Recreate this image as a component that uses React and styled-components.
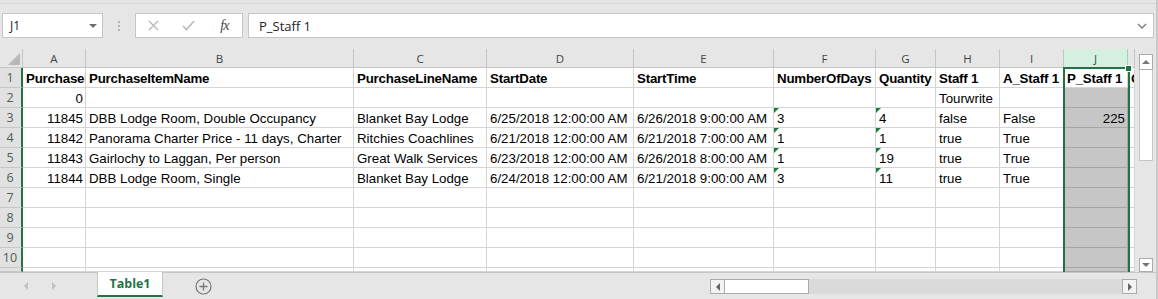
import React from 'react';
import styled, { createGlobalStyle, css } from 'styled-components';

const GREEN = '#217346';
const GRID = '#d4d4d4';

const GlobalStyle = createGlobalStyle`
  html, body { margin: 0; padding: 0; background: #e6e6e6; }
  body { width: 1158px; height: 299px; overflow: hidden; font-family: "Liberation Sans", Arial, sans-serif; }
  #root { width: 1158px; height: 299px; }
`;

const Window = styled.div`
  width: 1158px;
  height: 299px;
  box-sizing: border-box;
  display: flex;
  flex-direction: column;
  background: #e6e6e6;
  border-right: 2px solid #c9c9c9;
  overflow: hidden;
`;

/* ---------- formula bar ---------- */
const FormulaBar = styled.div`
  height: 46px;
  margin-top: 3px;
  box-sizing: border-box;
  border-top: 1px solid #d6d6d6;
  display: flex;
  align-items: flex-start;
  padding: 9px 2px 0 2px;
  font-family: "Open Sans", "Noto Sans", sans-serif;
`;

const NameBox = styled.div`
  width: 101px;
  height: 25px;
  box-sizing: border-box;
  border: 1px solid #c6c6c6;
  background: #fff;
  display: flex;
  align-items: center;
  justify-content: space-between;
  padding: 0 5px 0 7px;
  font-size: 12px;
  color: #222;
`;

const DropTriangle = styled.span`
  width: 0;
  height: 0;
  border-left: 4px solid transparent;
  border-right: 4px solid transparent;
  border-top: 4px solid #6f6f6f;
`;

const Splitter = styled.div`
  width: 32px;
  height: 25px;
  display: flex;
  flex-direction: column;
  align-items: center;
  justify-content: center;
  gap: 2px;
  & > span { width: 2px; height: 2px; background: #b4b4b4; }
`;

const FxGroup = styled.div`
  width: 108px;
  height: 25px;
  box-sizing: border-box;
  border: 1px solid #c6c6c6;
  background: #fff;
  display: grid;
  grid-template-columns: repeat(3, 1fr);
  align-items: center;
  justify-items: center;
`;

const FxLabel = styled.span`
  font-family: "Liberation Serif", "Times New Roman", serif;
  font-style: italic;
  font-size: 14px;
  color: #444;
  letter-spacing: -1px;
`;

const FormulaInput = styled.div`
  flex: 1;
  margin-left: 5px;
  height: 25px;
  box-sizing: border-box;
  border: 1px solid #c6c6c6;
  background: #fff;
  display: flex;
  align-items: center;
  justify-content: space-between;
  padding: 0 6px 0 10px;
  font-size: 13px;
  color: #222;
`;

/* ---------- sheet ---------- */
const Main = styled.div`
  height: 223px;
  display: flex;
`;

const Sheet = styled.div`
  position: relative;
  width: 1135px;
  height: 223px;
  overflow: hidden;
  display: grid;
  grid-template-columns: 23px 63px 268px 133px 147px 140px 102px 60px 64px 64px 64px 7px;
  grid-template-rows: 19px repeat(10, 20px) 4px;
  background: #fff;
`;

const Corner = styled.div`
  background: #e6e6e6;
  border-bottom: 1px solid #c6c6c6;
  border-right: 1px solid #c6c6c6;
  box-sizing: border-box;
  display: flex;
  align-items: flex-end;
  justify-content: flex-end;
  padding: 0 2px 2px 0;
`;

const ColHeader = styled.div`
  box-sizing: border-box;
  background: ${p => (p.$selected ? '#d3f0e0' : '#e6e6e6')};
  border-right: 1px solid ${p => (p.$selected ? '#9fd5b7' : '#c6c6c6')};
  border-bottom: 1px solid ${p => (p.$selected ? GREEN : '#c6c6c6')};
  display: flex;
  align-items: center;
  justify-content: center;
  font-family: "Open Sans", "Noto Sans", sans-serif;
  font-size: 11.5px;
  color: ${p => (p.$selected ? '#1e5c38' : '#444')};
  padding-top: 1px;
`;

const RowHeader = styled.div`
  box-sizing: border-box;
  background: #e1e1e1;
  border-right: 2px solid ${GREEN};
  border-bottom: 1px solid #c6c6c6;
  display: flex;
  align-items: center;
  justify-content: center;
  font-family: "Open Sans", "Noto Sans", sans-serif;
  font-size: 12.5px;
  color: #4f5d55;
  padding-right: 1px;
`;

const Cell = styled.div`
  position: relative;
  box-sizing: border-box;
  border-right: 1px solid ${p => (p.$sel ? '#a6a6a6' : GRID)};
  border-bottom: 1px solid ${p => (p.$sel ? '#a6a6a6' : GRID)};
  background: ${p => (p.$sel ? '#c6c6c6' : '#fff')};
  padding: 3px 2px 0 3px;
  line-height: 16px;
  font-size: 13.3px;
  color: #000;
  white-space: nowrap;
  overflow: hidden;
  text-align: ${p => (p.$right ? 'right' : 'left')};
  ${p => p.$bold && css`font-weight: bold; letter-spacing: -0.2px;`}
  ${p =>
    p.$flag &&
    css`
      &::before {
        content: '';
        position: absolute;
        top: 0;
        left: 0;
        border-top: 5px solid #1f7a3f;
        border-right: 5px solid transparent;
      }
    `}
`;

const Selection = styled.div`
  position: absolute;
  left: 1063px;
  top: 18px;
  width: 67px;
  height: 220px;
  box-sizing: border-box;
  border: 2px solid ${GREEN};
  pointer-events: none;
`;

const Handle = styled.span`
  position: absolute;
  right: -4px;
  top: -4px;
  width: 5px;
  height: 5px;
  background: ${GREEN};
  border: 1px solid #fff;
`;

/* ---------- vertical scrollbar ---------- */
const VScroll = styled.div`
  flex: 1;
  display: flex;
  flex-direction: column;
  padding: 5px 0 0 4px;
  box-sizing: border-box;
  background: #e6e6e6;
`;

const ScrollButton = styled.div`
  width: ${p => p.$w || 14}px;
  height: ${p => p.$h || 14}px;
  box-sizing: border-box;
  border: 1px solid #ababab;
  background: ${p => p.$bg || '#fff'};
  display: flex;
  align-items: center;
  justify-content: center;
  flex-shrink: 0;
`;

const VThumb = styled.div`
  width: 14px;
  height: 91px;
  box-sizing: border-box;
  border: 1px solid #c6c6c6;
  border-top: none;
  background: #fff;
`;

const Spacer = styled.div`
  flex: 1;
`;

const Tri = styled.span`
  width: 0;
  height: 0;
  ${p =>
    p.$dir === 'up' &&
    css`border-left: 4px solid transparent; border-right: 4px solid transparent; border-bottom: 4px solid ${p.$c || '#777'};`}
  ${p =>
    p.$dir === 'down' &&
    css`border-left: 4px solid transparent; border-right: 4px solid transparent; border-top: 4px solid ${p.$c || '#777'};`}
  ${p =>
    p.$dir === 'left' &&
    css`border-top: 4px solid transparent; border-bottom: 4px solid transparent; border-right: 4px solid ${p.$c || '#777'};`}
  ${p =>
    p.$dir === 'right' &&
    css`border-top: 4px solid transparent; border-bottom: 4px solid transparent; border-left: 4px solid ${p.$c || '#777'};`}
`;

/* ---------- tab bar ---------- */
const TabBar = styled.div`
  height: 27px;
  box-sizing: border-box;
  border-top: 1px solid #c6c6c6;
  display: flex;
  align-items: flex-start;
  background: #e6e6e6;
`;

const NavArea = styled.div`
  width: 97px;
  height: 26px;
  display: flex;
  align-items: center;
  padding-left: 24px;
  gap: 24px;
  box-sizing: border-box;
`;

const SheetTab = styled.div`
  width: 66px;
  height: 25px;
  margin-top: -1px;
  box-sizing: border-box;
  background: #fff;
  border-left: 1px solid #c6c6c6;
  border-right: 1px solid #c6c6c6;
  border-bottom: 2px solid ${GREEN};
  display: flex;
  align-items: center;
  justify-content: center;
  font-family: "Open Sans", "Noto Sans", sans-serif;
  font-weight: bold;
  font-size: 12.5px;
  color: ${GREEN};
`;

const AddSheet = styled.div`
  margin-left: 32px;
  height: 26px;
  display: flex;
  align-items: center;
`;

const HScroll = styled.div`
  margin-left: auto;
  margin-right: 19px;
  margin-top: 6px;
  width: 427px;
  height: 15px;
  display: flex;
  background: #dadada;
`;

const HThumb = styled.div`
  width: 84px;
  height: 15px;
  box-sizing: border-box;
  border: 1px solid #ababab;
  border-left: none;
  background: #fff;
`;

const COLS = ['A', 'B', 'C', 'D', 'E', 'F', 'G', 'H', 'I', 'J', 'K'];

const DATA = [
  { cells: ['PurchaseItemId', 'PurchaseItemName', 'PurchaseLineName', 'StartDate', 'StartTime', 'NumberOfDays', 'Quantity', 'Staff 1', 'A_Staff 1', 'P_Staff 1', 'C_Staff 1'], bold: true },
  { cells: ['0', '', '', '', '', '', '', 'Tourwrite', '', '', ''] },
  { cells: ['11845', 'DBB Lodge Room, Double Occupancy', 'Blanket Bay Lodge', '6/25/2018 12:00:00 AM', '6/26/2018 9:00:00 AM', '3', '4', 'false', 'False', '225', ''] },
  { cells: ['11842', 'Panorama Charter Price - 11 days, Charter', 'Ritchies Coachlines', '6/21/2018 12:00:00 AM', '6/21/2018 7:00:00 AM', '1', '1', 'true', 'True', '', ''] },
  { cells: ['11843', 'Gairlochy to Laggan, Per person', 'Great Walk Services', '6/23/2018 12:00:00 AM', '6/26/2018 8:00:00 AM', '1', '19', 'true', 'True', '', ''] },
  { cells: ['11844', 'DBB Lodge Room, Single', 'Blanket Bay Lodge', '6/24/2018 12:00:00 AM', '6/21/2018 9:00:00 AM', '3', '11', 'true', 'True', '', ''] },
];

const EMPTY = { cells: Array(11).fill('') };
const ROWS = [...DATA, EMPTY, EMPTY, EMPTY, EMPTY, EMPTY];

const isNumeric = s => /^\d+$/.test(s);

function SheetGrid() {
  return (
    <Sheet>
      <Corner>
        <svg width="12" height="12" viewBox="0 0 12 12">
          <polygon points="12,0 12,12 0,12" fill="#b8b8b8" />
        </svg>
      </Corner>
      {COLS.map(c => (
        <ColHeader key={c} $selected={c === 'J'}>{c === 'K' ? '' : c}</ColHeader>
      ))}
      {ROWS.map((row, ri) => (
        <React.Fragment key={ri}>
          <RowHeader>{ri < 10 ? ri + 1 : ''}</RowHeader>
          {row.cells.map((v, ci) => {
            const col = COLS[ci];
            const numeric = !row.bold && (ci === 0 || ci === 9) && isNumeric(v);
            const flag = !row.bold && (ci === 5 || ci === 6) && v !== '';
            const sel = col === 'J' && ri > 0;
            return (
              <Cell key={ci} $bold={row.bold} $right={numeric} $flag={flag} $sel={sel}>
                {v}
              </Cell>
            );
          })}
        </React.Fragment>
      ))}
      <Selection>
        <Handle />
      </Selection>
    </Sheet>
  );
}

export default function App() {
  return (
    <>
      <GlobalStyle />
      <Window>
        <FormulaBar>
          <NameBox>
            <span>J1</span>
            <DropTriangle />
          </NameBox>
          <Splitter>
            <span />
            <span />
            <span />
          </Splitter>
          <FxGroup>
            <svg width="11" height="11" viewBox="0 0 11 11">
              <path d="M1 1 L10 10 M10 1 L1 10" stroke="#b9b9b9" strokeWidth="1.4" fill="none" />
            </svg>
            <svg width="13" height="11" viewBox="0 0 13 11">
              <path d="M1 6 L4.5 9.5 L12 1" stroke="#b9b9b9" strokeWidth="1.6" fill="none" />
            </svg>
            <FxLabel>fx</FxLabel>
          </FxGroup>
          <FormulaInput>
            <span>P_Staff 1</span>
            <svg width="10" height="6" viewBox="0 0 10 6">
              <path d="M1 1 L5 5 L9 1" stroke="#777" strokeWidth="1.3" fill="none" />
            </svg>
          </FormulaInput>
        </FormulaBar>

        <Main>
          <SheetGrid />
          <VScroll>
            <ScrollButton $h={16}>
              <Tri $dir="up" />
            </ScrollButton>
            <VThumb />
            <Spacer />
            <ScrollButton $h={14}>
              <Tri $dir="down" />
            </ScrollButton>
          </VScroll>
        </Main>

        <TabBar>
          <NavArea>
            <Tri $dir="left" $c="#c2c2c2" />
            <Tri $dir="right" $c="#c2c2c2" />
          </NavArea>
          <SheetTab>Table1</SheetTab>
          <AddSheet>
            <svg width="17" height="17" viewBox="0 0 17 17">
              <circle cx="8.5" cy="8.5" r="7.5" stroke="#777" strokeWidth="1.2" fill="none" />
              <path d="M8.5 4.5 V12.5 M4.5 8.5 H12.5" stroke="#777" strokeWidth="1.3" />
            </svg>
          </AddSheet>
          <HScroll>
            <ScrollButton $w={15} $h={15} $bg="#f3f3f3">
              <Tri $dir="left" $c="#666" />
            </ScrollButton>
            <HThumb />
            <Spacer />
            <ScrollButton $w={15} $h={15} $bg="#f3f3f3">
              <Tri $dir="right" $c="#666" />
            </ScrollButton>
          </HScroll>
        </TabBar>
      </Window>
    </>
  );
}
